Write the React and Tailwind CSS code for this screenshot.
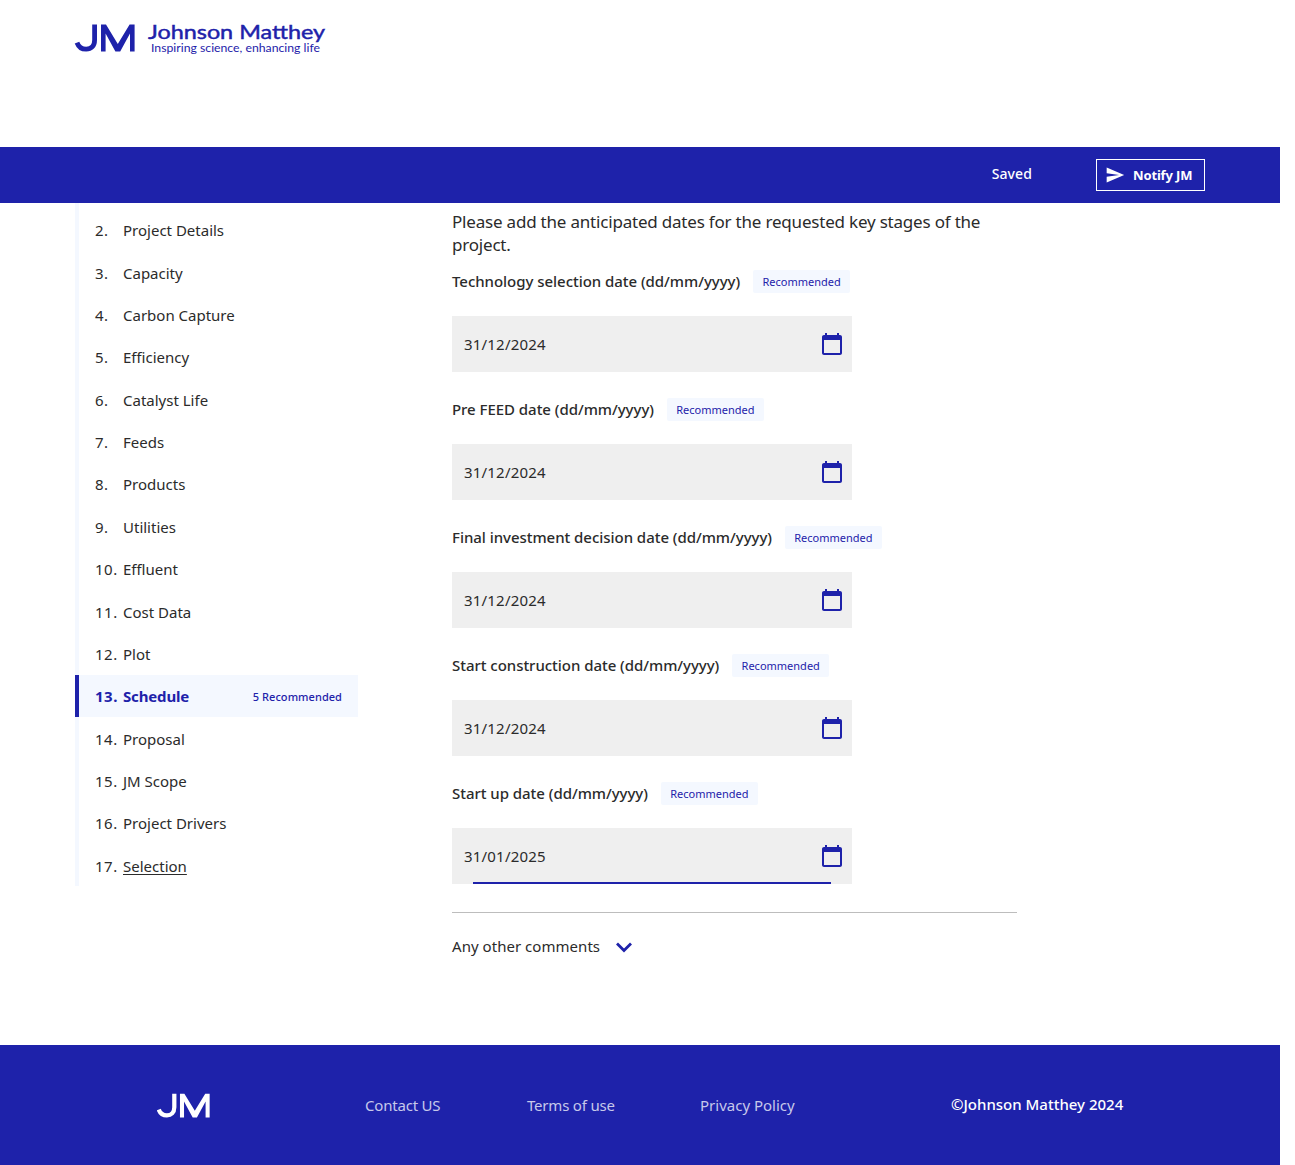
const steps = [
  [2, "Project Details"],
  [3, "Capacity"],
  [4, "Carbon Capture"],
  [5, "Efficiency"],
  [6, "Catalyst Life"],
  [7, "Feeds"],
  [8, "Products"],
  [9, "Utilities"],
  [10, "Effluent"],
  [11, "Cost Data"],
  [12, "Plot"],
  [13, "Schedule"],
  [14, "Proposal"],
  [15, "JM Scope"],
  [16, "Project Drivers"],
  [17, "Selection"],
];

const dates = [
  ["Technology selection date (dd/mm/yyyy)", "31/12/2024"],
  ["Pre FEED date (dd/mm/yyyy)", "31/12/2024"],
  ["Final investment decision date (dd/mm/yyyy)", "31/12/2024"],
  ["Start construction date (dd/mm/yyyy)", "31/12/2024"],
  ["Start up date (dd/mm/yyyy)", "31/01/2025"],
];

function Monogram() {
  return (
    <>
      <path
        fill="none"
        stroke="currentColor"
        strokeWidth="4.8"
        d="M19.6 .6V16C19.6 22.2 16 25.2 11.2 25.2C6.5 25.2 3.5 22.8 2 18.6"
      />
      <path
        fill="currentColor"
        d="M26 27.6V.6h5L42.8 20 54.6 .6h5V27.6h-4.6V9.5L45.2 27.6h-4.8L30.6 9.5V27.6z"
      />
    </>
  );
}

function Logo() {
  return (
    <svg className="block h-9 w-[252px] overflow-visible text-[#1e22aa]" viewBox="0 0 252 36">
      <Monogram />
      <text x="73" y="15" fill="currentColor" fontFamily="Lato, sans-serif" fontSize="19.5" fontWeight="400" stroke="currentColor" strokeWidth=".45" textLength="177" lengthAdjust="spacingAndGlyphs">
        Johnson Matthey
      </text>
      <text x="76" y="28" fill="currentColor" fontFamily="Lato, sans-serif" fontSize="11" textLength="169" lengthAdjust="spacingAndGlyphs">
        Inspiring science, enhancing life
      </text>
    </svg>
  );
}

function CalendarIcon() {
  return (
    <svg className="size-6" viewBox="0 0 24 24" fill="#1e22aa">
      <path d="M20 3h-1V1h-2v2H7V1H5v2H4c-1.1 0-2 .9-2 2v16c0 1.1.9 2 2 2h16c1.1 0 2-.9 2-2V5c0-1.1-.9-2-2-2zm0 18H4V8h16v13z" />
    </svg>
  );
}

function Step({ number, label }) {
  const active = number === 13;
  return (
    <li
      className={
        active
          ? "flex h-[42.36px] items-center border-l-4 border-[#1e22aa] bg-[#f4f8ff] pr-4 pl-4 font-bold tracking-[-0.15px] text-[#1e22aa]"
          : "flex h-[42.36px] items-center border-l-4 border-[#f4f8ff] pl-4"
      }
    >
      <span className="w-7 pt-px tracking-[0.5px]">{number}.</span>
      <span className={number === 17 ? "pt-px underline underline-offset-2" : "pt-px"}>{label}</span>
      {active && <span className="ml-auto pt-0.5 text-[11px] font-medium tracking-[0.05px]">5 Recommended</span>}
    </li>
  );
}

function DateField({ label, value, focused }) {
  return (
    <div className="h-32">
      <div className="flex h-6 items-center">
        <span className="text-[15px] font-medium tracking-[-0.04px]">{label}</span>
        <span className="ml-[13px] flex h-[23px] w-[97px] items-center justify-center rounded-xs bg-[#f4f8ff] pt-0.5 text-[11px] text-[#1e22aa]">
          Recommended
        </span>
      </div>
      <div className="relative mt-[23px] flex h-14 w-[400px] items-center justify-between bg-[#efefef] pr-2 pl-3">
        <span className="text-[15px] tracking-[0.2px]">{value}</span>
        <CalendarIcon />
        {focused && <span className="absolute bottom-0 left-[21px] h-0.5 w-[358px] bg-[#1e22aa]" />}
      </div>
    </div>
  );
}

export default function App() {
  return (
    <div className="h-[1165px] w-full overflow-hidden bg-white font-['Noto_Sans',sans-serif] text-[#2b2b2b]">
      <div className="flex h-full w-[1280px] flex-col">
        <header className="h-[147px] pt-6 pl-[75px]">
          <Logo />
        </header>

        <div className="flex h-14 items-center justify-end bg-[#1e22aa] pr-[75px] text-white">
          <span className="mr-16 pb-1 text-[14px] font-medium tracking-[0.1px]">Saved</span>
          <button className="flex h-8 w-[109px] items-center border border-white pl-2 text-[13px] font-bold tracking-[-0.15px]">
            <svg className="mr-2 size-5" viewBox="0 0 24 24" fill="currentColor">
              <path d="M2.01 21 23 12 2.01 3 2 10l15 2-15 2z" />
            </svg>
            <span className="pt-0.5">Notify JM</span>
          </button>
        </div>

        <div className="flex h-[842px] pl-[75px]">
          <ul className="h-[683px] w-[283px] overflow-hidden text-[15px]">
            <li className="h-[5.9px] border-l-4 border-[#f4f8ff]" />
            {steps.map(([number, label]) => (
              <Step key={number} number={number} label={label} />
            ))}
          </ul>

          <main className="ml-[94px] w-[565px] pt-[7px]">
            <p className="text-[17px] leading-[23px] tracking-[-0.2px]">
              Please add the anticipated dates for the requested key stages of the project.
            </p>
            <div className="mt-[13px] h-[644px] border-b border-[#bdbdbd]">
              {dates.map(([label, value], i) => (
                <DateField key={label} label={label} value={value} focused={i === 4} />
              ))}
            </div>
            <div className="mt-[22px] flex h-6 items-center text-[15px]">
              <span className="pb-0.5 tracking-[0.04px]">Any other comments</span>
              <svg className="ml-3 size-6" viewBox="0 0 24 24" fill="none" stroke="#1e22aa" strokeWidth="2.8">
                <path d="m5 8.5 7 7 7-7" />
              </svg>
            </div>
          </main>
        </div>

        <footer className="flex h-[120px] items-center bg-[#1e22aa] pl-[157px] text-[15px] text-white">
          <svg className="h-[25px] w-[53px]" viewBox="0 0 60 28">
            <Monogram />
          </svg>
          <nav className="ml-[155px] flex tracking-[-0.2px] text-[#c7c8ea]">
            <a className="w-[162px]">Contact US</a>
            <a className="w-[173px]">Terms of use</a>
            <a className="w-[251px] tracking-[0px]">Privacy Policy</a>
          </nav>
          <span className="pb-0.5 font-medium">©Johnson Matthey 2024</span>
        </footer>
      </div>
    </div>
  );
}
